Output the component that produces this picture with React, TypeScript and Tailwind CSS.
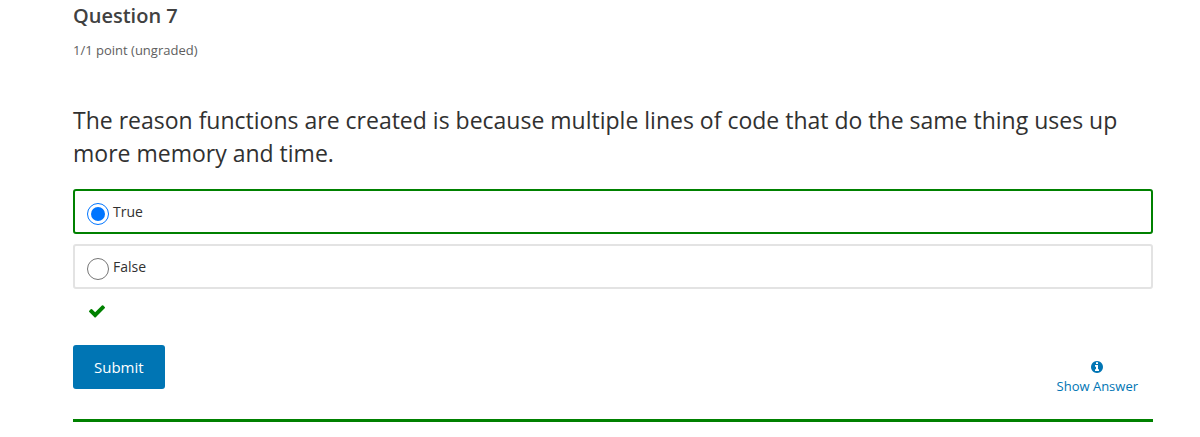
import { useState } from "react";

const choices = ["True", "False"];

function CheckIcon() {
  return (
    <svg viewBox="121 121 1550 1550" className="size-4 fill-[#008100]" role="img" aria-label="Correct">
      <path d="M1671 566q0 40-28 68l-724 724-136 136q-28 28-68 28t-68-28l-136-136-362-362q-28-28-28-68t28-68l136-136q28-28 68-28t68 28l294 295 656-657q28-28 68-28t68 28l136 136q28 28 28 68z" />
    </svg>
  );
}

function InfoIcon() {
  return (
    <svg viewBox="128 128 1536 1536" className="size-3 fill-[#0075b4]" aria-hidden="true">
      <path d="M1152 1376v-160q0-14-9-23t-23-9h-96v-512q0-14-9-23t-23-9h-320q-14 0-23 9t-9 23v160q0 14 9 23t23 9h96v320h-96q-14 0-23 9t-9 23v160q0 14 9 23t23 9h448q14 0 23-9t9-23zm-128-896v-160q0-14-9-23t-23-9h-192q-14 0-23 9t-9 23v160q0 14 9 23t23 9h192q14 0 23-9t9-23zm640 416q0 209-103 385.5t-279.5 279.5-385.5 103-385.5-103-279.5-279.5-103-385.5 103-385.5 279.5-279.5 385.5-103 385.5 103 279.5 279.5 103 385.5z" />
    </svg>
  );
}

export default function App() {
  const [selected, setSelected] = useState("True");

  return (
    <main className="bg-white pr-[47px] pl-[73px] font-['Open_Sans','Noto_Sans',sans-serif] text-[#313131]">
      <h3 className="pt-1 text-xl leading-6 font-semibold text-[#414141]">Question 7</h3>
      <p className="mt-3 text-[13px] leading-5 text-[#5e5e5e]">1/1 point (ungraded)</p>

      <form onSubmit={(event) => event.preventDefault()}>
        <fieldset className="mt-11">
          <legend className="text-[23px] leading-[33px]">
            The reason functions are created is because multiple lines of code that do the same thing uses up more
            memory and time.
          </legend>
          <div className="mt-[19px] flex flex-col gap-[10px]">
            {choices.map((choice) => (
              <label
                key={choice}
                className={`flex h-[45px] items-center gap-1 rounded-[3px] border-2 pl-3 text-sm ${
                  selected === choice ? "border-[#008100]" : "border-[#e3e3e3]"
                }`}
              >
                <input
                  type="radio"
                  name="answer"
                  value={choice}
                  checked={selected === choice}
                  onChange={() => setSelected(choice)}
                  className="mt-1 grid size-[22px] appearance-none place-items-center rounded-full border border-[#767676] bg-white before:size-[14px] before:rounded-full checked:border-[#0075ff] checked:before:bg-[#0075ff]"
                />
                {choice}
              </label>
            ))}
          </div>
        </fieldset>

        <div className="mt-3 flex h-5 items-center pl-4">
          <CheckIcon />
        </div>

        <div className="mt-6 flex items-start justify-between">
          <button type="submit" className="h-11 rounded-[3px] bg-[#0075b4] px-[21px] text-[15px] text-white">
            Submit
          </button>
          <button type="button" className="mt-4 mr-[15px] flex flex-col items-center text-[13px] text-[#0075b4]">
            <InfoIcon />
            <span className="mt-[3px] leading-5">Show Answer</span>
          </button>
        </div>
      </form>

      <hr className="mt-[23px] border-t-3 border-[#008100]" />
    </main>
  );
}
